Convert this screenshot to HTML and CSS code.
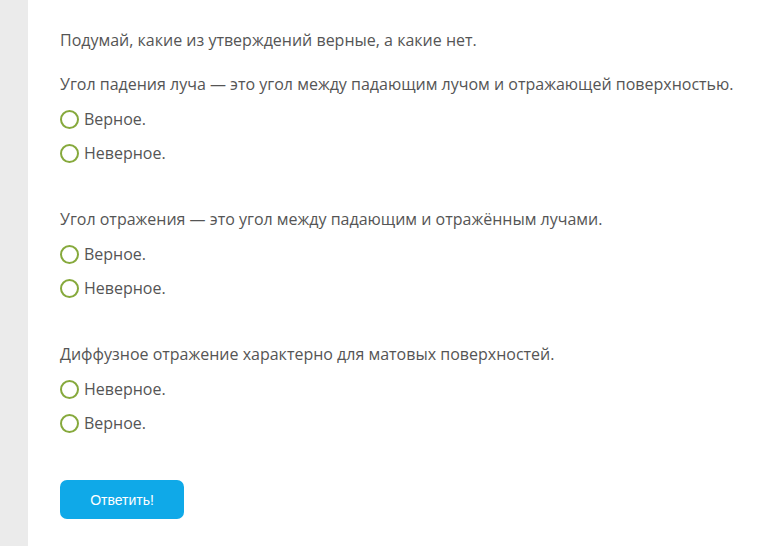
FILE: index.html
```html
<!DOCTYPE html>
<html lang="ru">
<head>
<meta charset="utf-8">
<link rel="stylesheet" href="styles.css">
<title>Тест</title>
</head>
<body>
<div class="panel">
  <p class="intro">Подумай, какие из утверждений верные, а какие нет.</p>

  <div class="question">
    <p class="q-text">Угол падения луча — это угол между падающим лучом и отражающей поверхностью.</p>
    <label class="option"><span class="radio"></span><span>Верное.</span></label>
    <label class="option"><span class="radio"></span><span>Неверное.</span></label>
  </div>

  <div class="question">
    <p class="q-text">Угол отражения — это угол между падающим и отражённым лучами.</p>
    <label class="option"><span class="radio"></span><span>Верное.</span></label>
    <label class="option"><span class="radio"></span><span>Неверное.</span></label>
  </div>

  <div class="question">
    <p class="q-text">Диффузное отражение характерно для матовых поверхностей.</p>
    <label class="option"><span class="radio"></span><span>Неверное.</span></label>
    <label class="option"><span class="radio"></span><span>Верное.</span></label>
  </div>

  <button class="answer" type="button">Ответить!</button>
</div>
</body>
</html>
```

FILE: styles.css
```css
* { box-sizing: border-box; }
html, body { margin: 0; height: 100%; }
body {
  background: #ebebeb;
  font-family: "Open Sans", "Noto Sans", sans-serif;
  font-size: 16px;
  color: #555555;
}
.panel {
  margin-left: 28px;
  min-height: 100%;
  background: #ffffff;
  padding: 29px 0 0 32px;
  display: flex;
  flex-direction: column;
  align-items: flex-start;
}
p { margin: 0; }
.intro { line-height: 22px; margin-bottom: 22px; }
.question { display: flex; flex-direction: column; margin-bottom: 38px; }
.question:last-of-type { margin-bottom: 40px; }
.q-text { line-height: 22px; margin-bottom: 7px; }
.option {
  height: 34px;
  display: flex;
  align-items: center;
  gap: 5px;
}
.radio {
  width: 19px;
  height: 19px;
  border: 2.5px solid #86a93c;
  border-radius: 50%;
  flex: none;
}
.answer {
  width: 124px;
  height: 39px;
  border: none;
  border-radius: 7px;
  background: #0fa9e8;
  color: #ffffff;
  font-family: "Liberation Sans", Arial, sans-serif;
  font-size: 14px;
  padding: 0;
}
```
